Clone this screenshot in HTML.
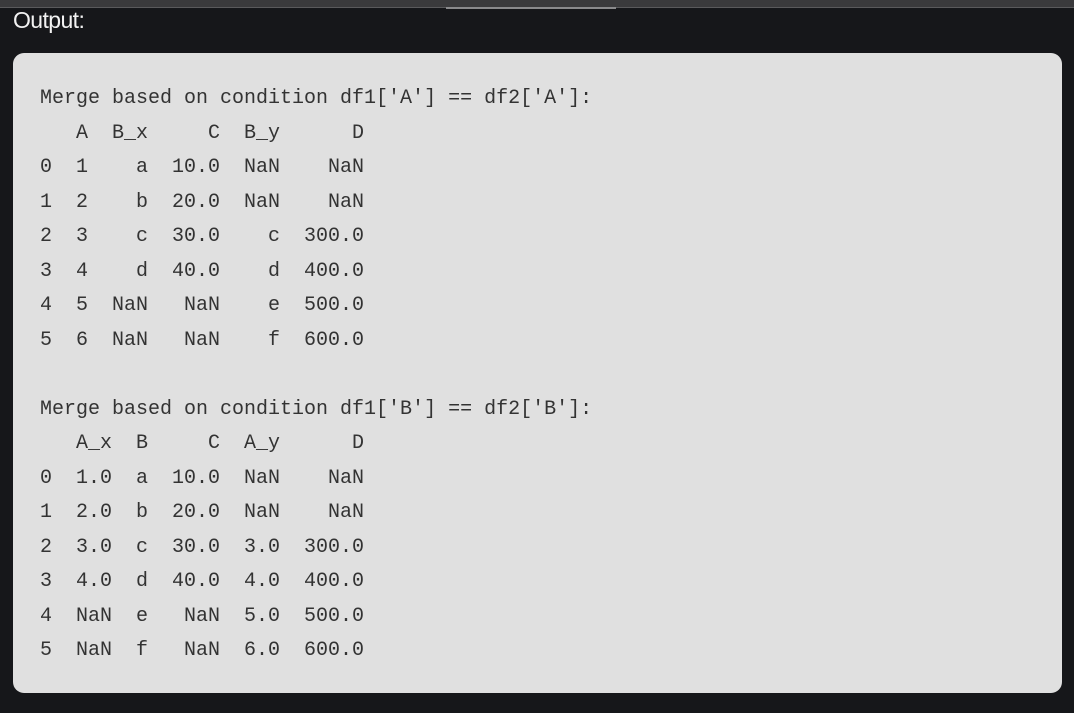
<!DOCTYPE html>
<html><head><meta charset="utf-8"><style>
html,body{margin:0;padding:0;width:1074px;height:713px;overflow:hidden;background:#16171a;}
.top{position:absolute;left:0;top:0;width:1074px;height:7px;background:#3a3a3c;border-bottom:1px solid #5a5a5c;}
.seg{position:absolute;left:446px;top:7px;width:170px;height:2px;background:#8a8a8c;}
.out{position:absolute;left:13px;top:7px;font-family:"Liberation Sans",sans-serif;font-size:23px;color:#f2f2f2;letter-spacing:-0.6px;}
.box{position:absolute;left:13px;top:53px;width:1049px;height:640px;background:#e0e0e0;border-radius:11px;}
pre{position:absolute;left:27px;top:29px;margin:0;font-family:"Liberation Mono",monospace;font-size:20px;line-height:34.5px;color:#333;}
</style></head><body>
<div class="top"></div><div class="seg"></div>
<div class="out">Output:</div>
<div class="box"><pre>Merge based on condition df1['A'] == df2['A']:
   A  B_x     C  B_y      D
0  1    a  10.0  NaN    NaN
1  2    b  20.0  NaN    NaN
2  3    c  30.0    c  300.0
3  4    d  40.0    d  400.0
4  5  NaN   NaN    e  500.0
5  6  NaN   NaN    f  600.0

Merge based on condition df1['B'] == df2['B']:
   A_x  B     C  A_y      D
0  1.0  a  10.0  NaN    NaN
1  2.0  b  20.0  NaN    NaN
2  3.0  c  30.0  3.0  300.0
3  4.0  d  40.0  4.0  400.0
4  NaN  e   NaN  5.0  500.0
5  NaN  f   NaN  6.0  600.0</pre></div>
</body></html>
